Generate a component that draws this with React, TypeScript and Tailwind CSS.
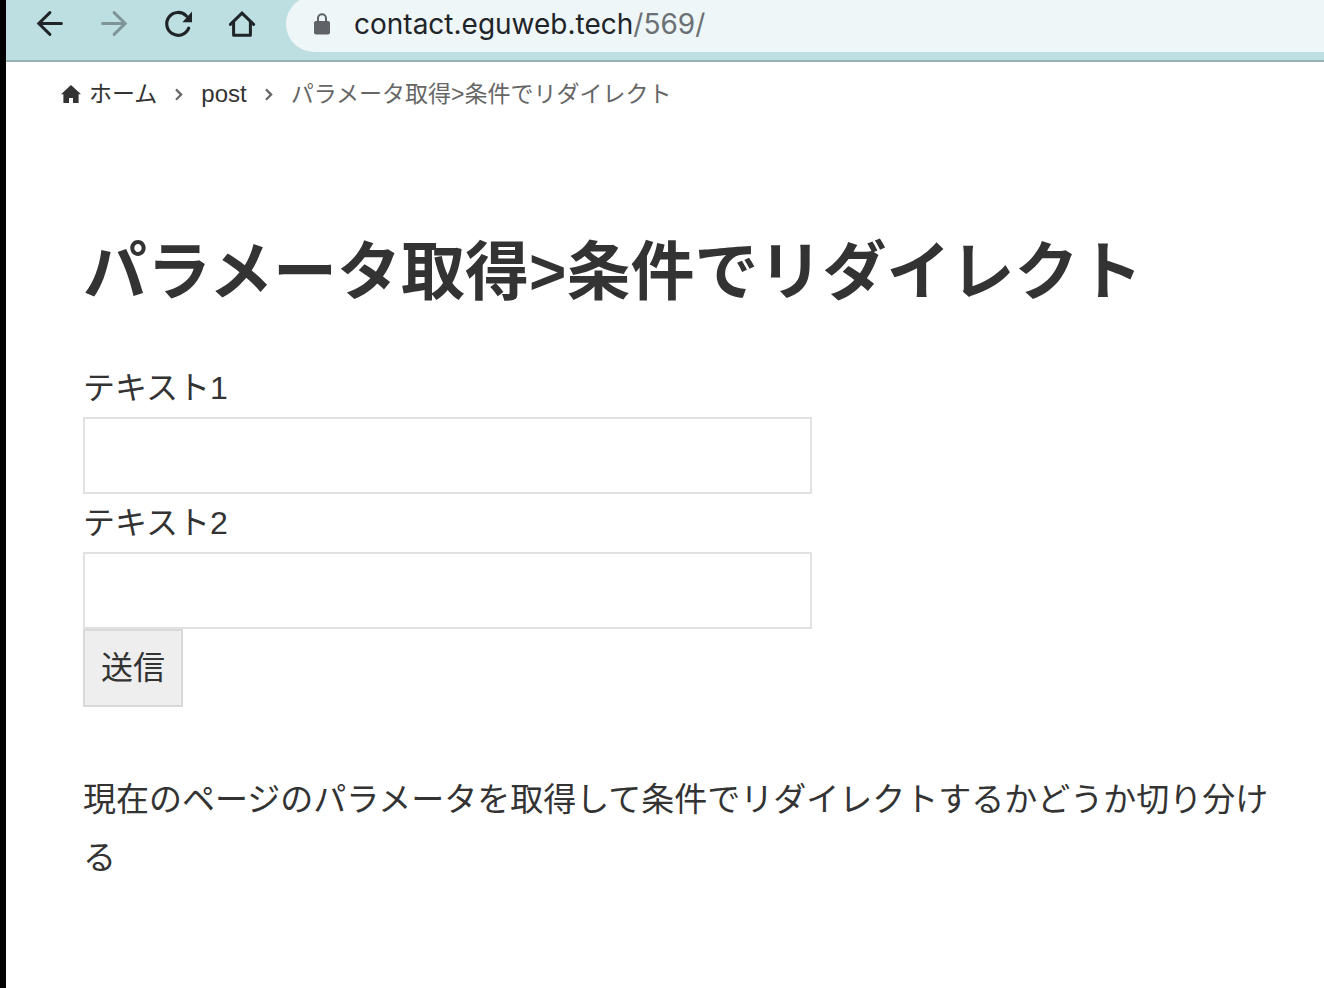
import { useState } from 'react'

const FIELDS = [
  { id: 'text1', label: 'テキスト1' },
  { id: 'text2', label: 'テキスト2' },
]

function BackIcon() {
  return (
    <svg viewBox="0 0 32 32" className="size-8" fill="none" stroke="currentColor" strokeWidth="3" strokeLinecap="round">
      <path d="M27.4 15.5H4.8M15.9 4.6 4.8 15.5l11.1 10.9" />
    </svg>
  )
}

function ForwardIcon() {
  return (
    <svg viewBox="0 0 32 32" className="size-8" fill="none" stroke="currentColor" strokeWidth="3" strokeLinecap="round">
      <path d="M4.600 15.500h22.600M16.100 4.600l11.100 10.900-11.100 10.900" />
    </svg>
  )
}

function ReloadIcon() {
  return (
    <svg viewBox="0 0 32 32" className="size-8" fill="none">
      <path d="M26.7 20.2A11.4 11.4 0 1 1 24.4 8" stroke="currentColor" strokeWidth="3.2" strokeLinecap="round" />
      <path d="M30 3.600v10.600H20.400z" fill="currentColor" />
    </svg>
  )
}

function HomeIcon() {
  return (
    <svg viewBox="0 0 32 32" className="size-8" fill="none" stroke="currentColor" strokeWidth="3">
      <path d="M4.4 16.4 16 5.2l11.6 11.2" strokeLinecap="round" />
      <path d="M7.6 14v13.2h16.8V14" strokeLinejoin="round" />
    </svg>
  )
}

function LockIcon() {
  return (
    <svg viewBox="0 0 16 22" className="h-[22px] w-4 shrink-0 text-[#5f6368]">
      <path d="M4 9V5.200a4 4 0 0 1 8 0V9" fill="none" stroke="currentColor" strokeWidth="2" />
      <rect y="8" width="16" height="13.4" rx="2" fill="currentColor" />
    </svg>
  )
}

function Separator() {
  return (
    <svg viewBox="0 0 12 16" className="h-4 w-3 shrink-0 text-[#666]" fill="none" stroke="currentColor" strokeWidth="2.2">
      <path d="M3 3.400 8.200 8.600 3 13.800" />
    </svg>
  )
}

export default function App() {
  const [values, setValues] = useState<Record<string, string>>({})

  return (
    <div className="min-h-screen border-l-6 border-black bg-white font-['Liberation_Sans','Noto_Sans_CJK_JP',sans-serif] text-[#333]">
      <header className="overflow-hidden border-b-2 border-[#98b1b3] bg-[#bddfe1] pb-2 text-[#1f2428]">
        <div className="-mt-1 flex h-14 items-center pl-7">
          <nav className="flex gap-8">
            <button type="button" aria-label="戻る"><BackIcon /></button>
            <button type="button" aria-label="進む" disabled className="text-[#7f9497]"><ForwardIcon /></button>
            <button type="button" aria-label="再読み込み"><ReloadIcon /></button>
            <button type="button" aria-label="ホームページ"><HomeIcon /></button>
          </nav>
          <div className="ml-7 flex h-full flex-1 items-center gap-6 rounded-l-full bg-[#eef6f8] pl-7">
            <LockIcon />
            <span className="font-[Inter] text-[28px] text-[#1f2428]">
              contact.eguweb.tech<span className="text-[#6b7074]">/569/</span>
            </span>
          </div>
        </div>
      </header>

      <nav className="flex items-center gap-4 py-4 pl-[55px] text-[23px] leading-8">
        <a href="#" className="flex items-center gap-2">
          <svg viewBox="0 0 20 18" className="h-[18px] w-5" fill="currentColor">
            <path d="M10 0 0 9.200h2.400V18H8v-5h4v5h5.600V9.200H20z" />
          </svg>
          ホーム
        </a>
        <Separator />
        <a href="#" className="text-2xl leading-8">post</a>
        <Separator />
        <span className="text-[#666]">パラメータ取得&gt;条件でリダイレクト</span>
      </nav>

      <main className="pt-[98px] pr-12 pb-24 pl-[77px] text-[32px] leading-[58px]">
        <h1 className="mb-[39px] text-[64px] leading-24 font-bold">パラメータ取得&gt;条件でリダイレクト</h1>

        <form onSubmit={e => e.preventDefault()}>
          {FIELDS.map(field => (
            <div key={field.id}>
              <label htmlFor={field.id} className="block">{field.label}</label>
              <input
                id={field.id}
                type="text"
                value={values[field.id] ?? ''}
                onChange={e => setValues(v => ({ ...v, [field.id]: e.target.value }))}
                className="block h-[77px] w-full max-w-[729px] border-2 border-[#e1e1e1] px-4 focus:outline-none"
              />
            </div>
          ))}
          <button type="submit" className="block border-2 border-[#d9d9d9] bg-[#eee] px-4 py-2">送信</button>
        </form>

        <p className="mt-16 text-[33px]">現在のページのパラメータを取得して条件でリダイレクトするかどうか切り分ける</p>
      </main>
    </div>
  )
}
